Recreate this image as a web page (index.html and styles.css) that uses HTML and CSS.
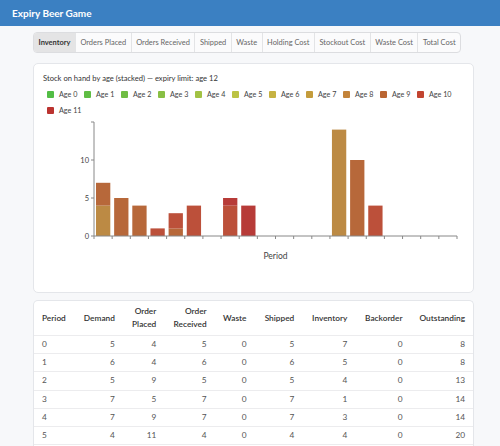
FILE: index.html
```html
<!DOCTYPE html>
<html>
<head>
    <title>Expiry Beer Game</title>
    <link rel="stylesheet" href="styles.css">
</head>
<body>
    <header class="topbar">Expiry Beer Game</header>

    <main class="content">
        <nav class="tabs">
            <span class="tab active">Inventory</span>
            <span class="tab">Orders Placed</span>
            <span class="tab">Orders Received</span>
            <span class="tab">Shipped</span>
            <span class="tab">Waste</span>
            <span class="tab">Holding Cost</span>
            <span class="tab">Stockout Cost</span>
            <span class="tab">Waste Cost</span>
            <span class="tab">Total Cost</span>
        </nav>

        <section class="card chart-card">
            <div class="chart-title">Stock on hand by age (stacked) — expiry limit: age 12</div>
            <ul class="legend">
                <li><i style="background:#52bd45"></i>Age 0</li>
                <li><i style="background:#5fbd44"></i>Age 1</li>
                <li><i style="background:#70bd44"></i>Age 2</li>
                <li><i style="background:#88bf44"></i>Age 3</li>
                <li><i style="background:#a2c244"></i>Age 4</li>
                <li><i style="background:#bcc344"></i>Age 5</li>
                <li><i style="background:#c6b242"></i>Age 6</li>
                <li><i style="background:#c49c3c"></i>Age 7</li>
                <li><i style="background:#c3833a"></i>Age 8</li>
                <li><i style="background:#ba6532"></i>Age 9</li>
                <li><i style="background:#c24430"></i>Age 10</li>
                <li><i style="background:#bb3330"></i>Age 11</li>
            </ul>
            <svg class="chart" width="422" height="166" viewBox="0 0 422 166">
                <!-- bars -->
                <g class="bars">
                    <rect x="53" y="90.6" width="14.3" height="30.4" fill="#b8843a"/>
                    <rect x="53" y="67.8" width="14.3" height="22.8" fill="#b3602f"/>
                    <rect x="71.15" y="83" width="14.3" height="38" fill="#b3602f"/>
                    <rect x="89.3" y="90.6" width="14.3" height="30.4" fill="#b3602f"/>
                    <rect x="107.45" y="113.4" width="14.3" height="7.6" fill="#b8472f"/>
                    <rect x="125.6" y="113.4" width="14.3" height="7.6" fill="#b3602f"/>
                    <rect x="125.6" y="98.2" width="14.3" height="15.2" fill="#b8472f"/>
                    <rect x="143.75" y="90.6" width="14.3" height="30.4" fill="#b8472f"/>
                    <rect x="180.05" y="90.6" width="14.3" height="30.4" fill="#b8472f"/>
                    <rect x="180.05" y="83" width="14.3" height="7.6" fill="#b3302d"/>
                    <rect x="198.2" y="90.6" width="14.3" height="30.4" fill="#b3302d"/>
                    <rect x="288.95" y="14.6" width="14.3" height="106.4" fill="#b8843a"/>
                    <rect x="307.1" y="45" width="14.3" height="76" fill="#b3602f"/>
                    <rect x="325.25" y="90.6" width="14.3" height="30.4" fill="#b8472f"/>
                </g>
                <!-- y axis -->
                <g class="axis">
                    <path d="M48,7H51V121H48"/>
                    <path d="M48,83H51M48,45H51"/>
                    <text x="46" y="121" text-anchor="end" dy="3">0</text>
                    <text x="46" y="83" text-anchor="end" dy="3">5</text>
                    <text x="46" y="45" text-anchor="end" dy="3">10</text>
                </g>
                <!-- x axis -->
                <g class="axis">
                    <path d="M51,124V121H414V124"/>
                    <path d="M69.15,121v3M87.3,121v3M105.45,121v3M123.6,121v3M141.75,121v3M159.9,121v3M178.05,121v3M196.2,121v3M214.35,121v3M232.5,121v3M250.65,121v3M268.8,121v3M286.95,121v3M305.1,121v3M323.25,121v3M341.4,121v3M359.55,121v3M377.7,121v3M395.85,121v3"/>
                </g>
                <text class="axis-label" x="232.5" y="144" text-anchor="middle">Period</text>
            </svg>
        </section>

        <section class="card table-card">
            <table>
                <thead>
                    <tr>
                        <th class="left">Period</th>
                        <th>Demand</th>
                        <th>Order<br>Placed</th>
                        <th>Order<br>Received</th>
                        <th>Waste</th>
                        <th>Shipped</th>
                        <th>Inventory</th>
                        <th>Backorder</th>
                        <th>Outstanding</th>
                    </tr>
                </thead>
                <tbody>
                    <tr><td class="left">0</td><td>5</td><td>4</td><td>5</td><td>0</td><td>5</td><td>7</td><td>0</td><td>8</td></tr>
                    <tr><td class="left">1</td><td>6</td><td>4</td><td>6</td><td>0</td><td>6</td><td>5</td><td>0</td><td>8</td></tr>
                    <tr><td class="left">2</td><td>5</td><td>9</td><td>5</td><td>0</td><td>5</td><td>4</td><td>0</td><td>13</td></tr>
                    <tr><td class="left">3</td><td>7</td><td>5</td><td>7</td><td>0</td><td>7</td><td>1</td><td>0</td><td>14</td></tr>
                    <tr><td class="left">4</td><td>7</td><td>9</td><td>7</td><td>0</td><td>7</td><td>3</td><td>0</td><td>14</td></tr>
                    <tr><td class="left">5</td><td>4</td><td>11</td><td>4</td><td>0</td><td>4</td><td>4</td><td>0</td><td>20</td></tr>
                </tbody>
            </table>
        </section>
    </main>
</body>
</html>
```

FILE: styles.css
```css
body { margin: 0; font-family: Lato, "Noto Sans", sans-serif; background: #f7f8fa; color: #333; height: 446px; overflow: hidden; }

.topbar { height: 26px; line-height: 26px; padding: 0 12px; background: #3b80c2; color: #fff; font-size: 10px; font-weight: 700; }

.content { padding: 6px 26px 0 33px; }

.tabs { display: flex; width: fit-content; height: 21px; border: 1px solid #dcdde0; border-radius: 4px; background: #fbfbfc; overflow: hidden; box-sizing: border-box; }
.tab { flex: none; white-space: nowrap; padding: 0 4.5px; line-height: 19px; font-size: 7.45px; color: #666; border-right: 1px solid #e3e4e6; }
.tab:last-child { border-right: none; }
.tab.active { background: #e4e4e5; color: #333; font-weight: 700; }

.card { background: #fff; border: 1px solid #e4e6ea; border-radius: 5px; }
.chart-card { margin-top: 10px; height: 230px; box-sizing: border-box; padding: 8px 8px 0 9px; }
.chart-title { font-size: 7.6px; color: #333; line-height: 12px; }
.legend { list-style: none; margin: 3px 0 0 4px; padding: 0; display: flex; flex-wrap: wrap; }
.legend li { width: 37px; display: flex; align-items: center; font-size: 7.2px; color: #444; line-height: 15.5px; }
.legend i { width: 7px; height: 7px; border-radius: 1px; margin-right: 5px; }

.chart { display: block; margin-top: -3px; }
.bars rect { fill-opacity: 0.95; }
.axis path { fill: none; stroke: #888; stroke-width: 1; }
.axis text { font-size: 7.5px; fill: #444; }
.axis-label { font-size: 8.5px; fill: #444; }

.table-card { margin-top: 7px; height: 146px; box-sizing: border-box; border-bottom: none; border-radius: 5px 5px 0 0; overflow: hidden; }
table { border-collapse: collapse; font-size: 8.3px; }
th { padding: 4px 8px; line-height: 13px; font-weight: 600; color: #333; text-align: right; vertical-align: middle; }
td { padding: 4px 8px; line-height: 9.2px; color: #555; text-align: right; border-top: 1px solid #ececee; }
tbody tr:last-child td { border-bottom: 1px solid #ececee; }
.left { text-align: left; }
th:nth-child(1) { width: 26px; }
th:nth-child(2) { width: 32px; }
th:nth-child(3) { width: 26px; }
th:nth-child(4) { width: 35px; }
th:nth-child(5) { width: 24px; }
th:nth-child(6) { width: 33px; }
th:nth-child(7) { width: 38px; }
th:nth-child(8) { width: 40px; }
th:nth-child(9) { width: 47px; }
```
